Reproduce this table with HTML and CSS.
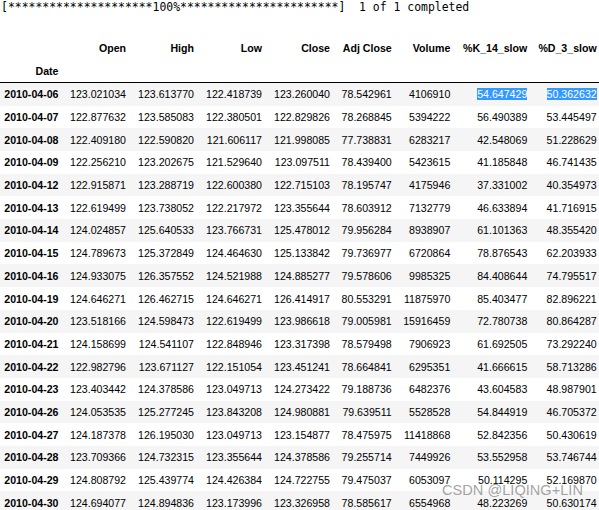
FILE: index.html
```html
<!DOCTYPE html>
<html>
<head>
<meta charset="utf-8">
<link rel="stylesheet" href="styles.css">
</head>
<body>
<pre class="stdout">[*********************100%***********************]  1 of 1 completed</pre>
<table class="df">
<colgroup>
<col class="c-idx"><col class="c-num"><col class="c-num"><col class="c-num"><col class="c-num"><col class="c-adj"><col class="c-vol"><col class="c-k"><col class="c-d">
</colgroup>
<thead>
<tr><th></th><th>Open</th><th>High</th><th>Low</th><th>Close</th><th>Adj Close</th><th>Volume</th><th>%K_14_slow</th><th>%D_3_slow</th></tr>
<tr class="idxname"><th>Date</th><th></th><th></th><th></th><th></th><th></th><th></th><th></th><th></th></tr>
</thead>
<tbody>
<tr><th>2010-04-06</th><td>123.021034</td><td>123.613770</td><td>122.418739</td><td>123.260040</td><td>78.542961</td><td>4106910</td><td><span class="sel">54.647429</span></td><td><span class="sel">50.362632</span></td></tr>
<tr><th>2010-04-07</th><td>122.877632</td><td>123.585083</td><td>122.380501</td><td>122.829826</td><td>78.268845</td><td>5394222</td><td>56.490389</td><td>53.445497</td></tr>
<tr><th>2010-04-08</th><td>122.409180</td><td>122.590820</td><td>121.606117</td><td>121.998085</td><td>77.738831</td><td>6283217</td><td>42.548069</td><td>51.228629</td></tr>
<tr><th>2010-04-09</th><td>122.256210</td><td>123.202675</td><td>121.529640</td><td>123.097511</td><td>78.439400</td><td>5423615</td><td>41.185848</td><td>46.741435</td></tr>
<tr><th>2010-04-12</th><td>122.915871</td><td>123.288719</td><td>122.600380</td><td>122.715103</td><td>78.195747</td><td>4175946</td><td>37.331002</td><td>40.354973</td></tr>
<tr><th>2010-04-13</th><td>122.619499</td><td>123.738052</td><td>122.217972</td><td>123.355644</td><td>78.603912</td><td>7132779</td><td>46.633894</td><td>41.716915</td></tr>
<tr><th>2010-04-14</th><td>124.024857</td><td>125.640533</td><td>123.766731</td><td>125.478012</td><td>79.956284</td><td>8938907</td><td>61.101363</td><td>48.355420</td></tr>
<tr><th>2010-04-15</th><td>124.789673</td><td>125.372849</td><td>124.464630</td><td>125.133842</td><td>79.736977</td><td>6720864</td><td>78.876543</td><td>62.203933</td></tr>
<tr><th>2010-04-16</th><td>124.933075</td><td>126.357552</td><td>124.521988</td><td>124.885277</td><td>79.578606</td><td>9985325</td><td>84.408644</td><td>74.795517</td></tr>
<tr><th>2010-04-19</th><td>124.646271</td><td>126.462715</td><td>124.646271</td><td>126.414917</td><td>80.553291</td><td>11875970</td><td>85.403477</td><td>82.896221</td></tr>
<tr><th>2010-04-20</th><td>123.518166</td><td>124.598473</td><td>122.619499</td><td>123.986618</td><td>79.005981</td><td>15916459</td><td>72.780738</td><td>80.864287</td></tr>
<tr><th>2010-04-21</th><td>124.158699</td><td>124.541107</td><td>122.848946</td><td>123.317398</td><td>78.579498</td><td>7906923</td><td>61.692505</td><td>73.292240</td></tr>
<tr><th>2010-04-22</th><td>122.982796</td><td>123.671127</td><td>122.151054</td><td>123.451241</td><td>78.664841</td><td>6295351</td><td>41.666615</td><td>58.713286</td></tr>
<tr><th>2010-04-23</th><td>123.403442</td><td>124.378586</td><td>123.049713</td><td>124.273422</td><td>79.188736</td><td>6482376</td><td>43.604583</td><td>48.987901</td></tr>
<tr><th>2010-04-26</th><td>124.053535</td><td>125.277245</td><td>123.843208</td><td>124.980881</td><td>79.639511</td><td>5528528</td><td>54.844919</td><td>46.705372</td></tr>
<tr><th>2010-04-27</th><td>124.187378</td><td>126.195030</td><td>123.049713</td><td>123.154877</td><td>78.475975</td><td>11418868</td><td>52.842356</td><td>50.430619</td></tr>
<tr><th>2010-04-28</th><td>123.709366</td><td>124.732315</td><td>123.355644</td><td>124.378586</td><td>79.255714</td><td>7449926</td><td>53.552958</td><td>53.746744</td></tr>
<tr><th>2010-04-29</th><td>124.808792</td><td>125.439774</td><td>124.426384</td><td>124.722755</td><td>79.475037</td><td>6053097</td><td>50.114295</td><td>52.169870</td></tr>
<tr><th>2010-04-30</th><td>124.694077</td><td>124.894836</td><td>123.173996</td><td>123.326958</td><td>78.585617</td><td>6554968</td><td>48.223269</td><td>50.630174</td></tr>
</tbody>
</table>
<div class="watermark">CSDN @LIQING+LIN</div>
</body>
</html>
```

FILE: styles.css
```css
html, body {
  margin: 0;
  padding: 0;
  overflow: hidden;
  background: #fff;
}

body {
  position: relative;
  width: 599px;
  height: 510px;
}

.stdout {
  margin: 0;
  padding-left: 1px;
  font-family: "DejaVu Sans Mono", "Liberation Mono", monospace;
  font-size: 11.44px;
  line-height: 14px;
  color: #000;
  white-space: pre;
}

.df {
  margin-top: 22.6px;
  border-collapse: separate;
  border-spacing: 0;
  table-layout: fixed;
  width: 598.7px;
  font-family: "Liberation Sans", Arial, sans-serif;
  font-size: 10.6px;
  color: #000;
}

.c-idx { width: 64.5px; }
.c-num { width: 68px; }
.df col.c-num:nth-child(2) { width: 67.5px; }
.c-adj { width: 61.7px; }
.c-vol { width: 58.6px; }
.c-k { width: 77px; }
.c-d { width: 65.4px; }

.df th,
.df td {
  padding: 5.35px 6px 5.35px 0;
  line-height: 12px;
  text-align: right;
  vertical-align: middle;
  white-space: nowrap;
}

.df th:last-child,
.df td:last-child {
  padding-right: 2px;
}

.df th {
  font-weight: bold;
}

.df td {
  font-weight: normal;
}

.df .idxname th {
  border-bottom: 1px solid #000;
}

.df tbody tr:nth-child(odd) {
  background: #f5f5f5;
}

.sel {
  background: #3399ff;
  color: #fff;
}

.watermark {
  position: absolute;
  left: 442px;
  top: 481px;
  font-family: "Liberation Sans", Arial, sans-serif;
  font-size: 14.6px;
  line-height: 18px;
  color: rgba(140, 140, 140, 0.8);
  white-space: nowrap;
}
```
